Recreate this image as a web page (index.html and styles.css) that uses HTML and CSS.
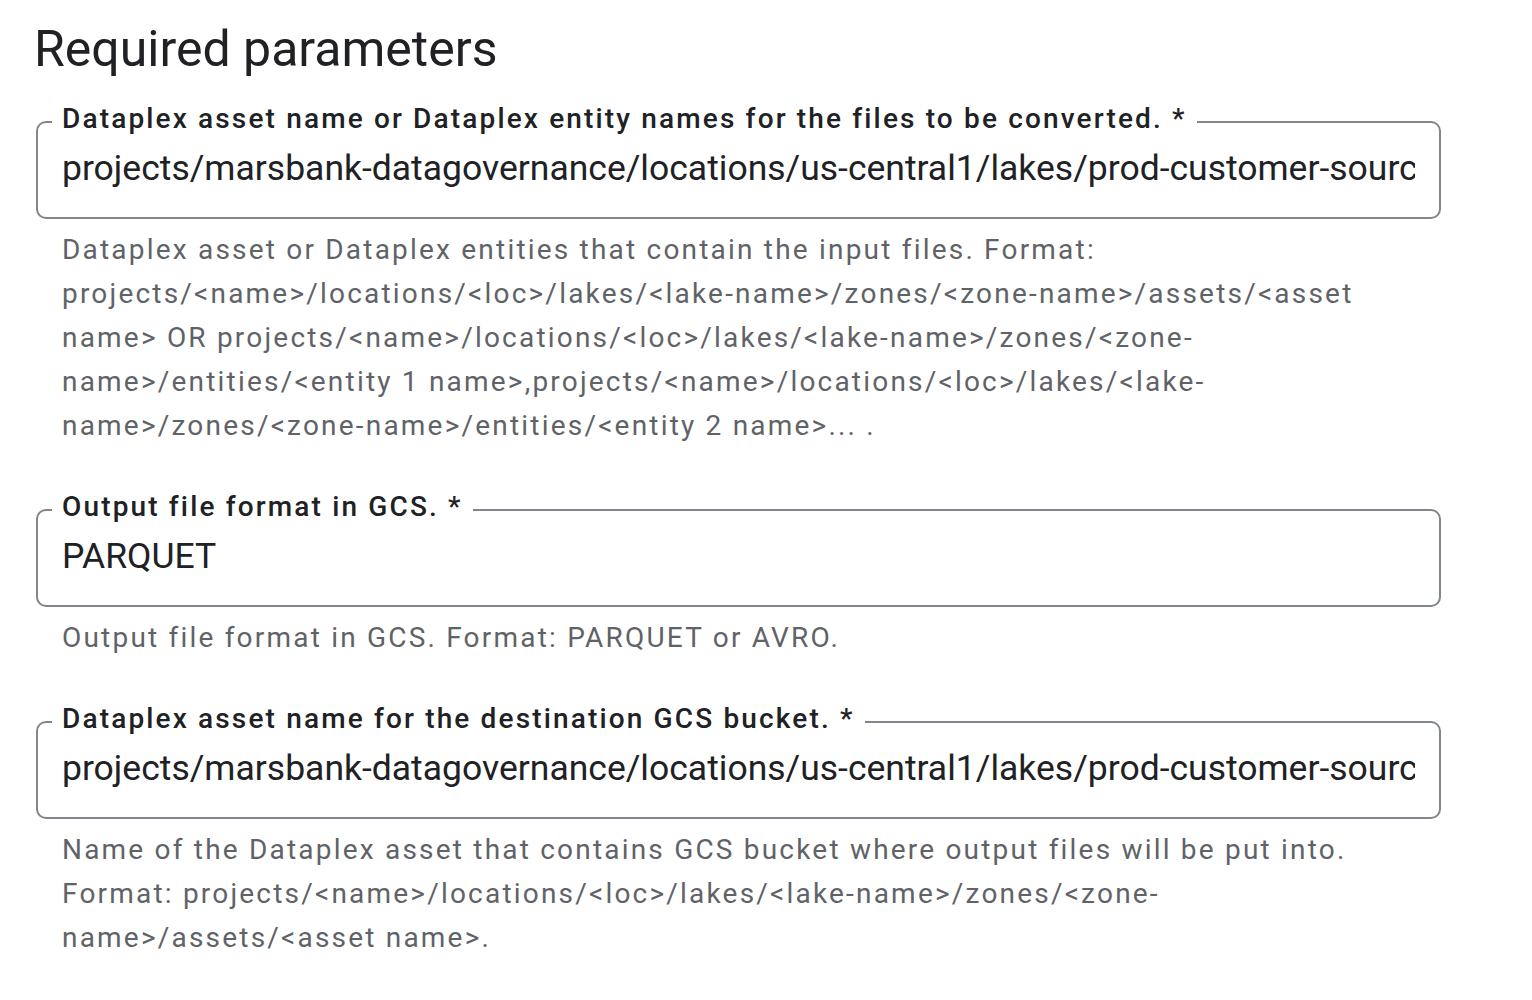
FILE: index.html
```html
<!DOCTYPE html>
<html>
<head>
<meta charset="utf-8">
<title>Required parameters</title>
<link rel="stylesheet" href="styles.css">
</head>
<body>
    <div class="params">
        <h2 class="params-title">Required parameters</h2>

        <!-- 输入资产 -->
        <div class="field-group">
            <fieldset class="field">
                <legend class="field-label">Dataplex asset name or Dataplex entity names for the files to be converted. *</legend>
                <input type="text" class="field-input" readonly value="projects/marsbank-datagovernance/locations/us-central1/lakes/prod-customer-source/zones/raw-zone/assets/customer-raw-data">
            </fieldset>
            <p class="field-hint">Dataplex asset or Dataplex entities that contain the input files. Format: projects/&lt;name&gt;/locations/&lt;loc&gt;/lakes/&lt;lake-name&gt;/zones/&lt;zone-name&gt;/assets/&lt;asset name&gt; OR projects/&lt;name&gt;/locations/&lt;loc&gt;/lakes/&lt;lake-name&gt;/zones/&lt;zone-name&gt;/entities/&lt;entity 1 name&gt;,projects/&lt;name&gt;/locations/&lt;loc&gt;/lakes/&lt;lake-name&gt;/zones/&lt;zone-name&gt;/entities/&lt;entity 2 name&gt;... .</p>
        </div>

        <!-- 输出格式 -->
        <div class="field-group">
            <fieldset class="field">
                <legend class="field-label">Output file format in GCS. *</legend>
                <input type="text" class="field-input" readonly value="PARQUET">
            </fieldset>
            <p class="field-hint">Output file format in GCS. Format: PARQUET or AVRO.</p>
        </div>

        <!-- 目标资产 -->
        <div class="field-group">
            <fieldset class="field">
                <legend class="field-label">Dataplex asset name for the destination GCS bucket. *</legend>
                <input type="text" class="field-input" readonly value="projects/marsbank-datagovernance/locations/us-central1/lakes/prod-customer-source/zones/curated-zone/assets/customer-curated-data">
            </fieldset>
            <p class="field-hint">Name of the Dataplex asset that contains GCS bucket where output files will be put into. Format: projects/&lt;name&gt;/locations/&lt;loc&gt;/lakes/&lt;lake-name&gt;/zones/&lt;zone-name&gt;/assets/&lt;asset name&gt;.</p>
        </div>
    </div>
</body>
</html>
```

FILE: styles.css
```css
* { margin: 0; padding: 0; box-sizing: border-box; }
body { background: #fff; font-family: Roboto, "Liberation Sans", Arial, sans-serif; color: #202124; }

.params { width: 1441px; padding-left: 36px; }
.params-title { margin: 19px 0 26px -2px; font-size: 50px; line-height: 60px; font-weight: 400; color: #202124; }

.field-group { margin-bottom: 45px; }
.field { width: 100%; border: 2px solid #80868b; border-radius: 10px; padding: 9px 24px 29px; min-width: 0; }
.field-label { margin-left: -10px; padding: 0 10px 6px; font-size: 28px; line-height: 28px; font-weight: 500; letter-spacing: 2.15px; color: #202124; }
.field-input { display: block; width: 100%; height: 40px; border: none; outline: none; background: transparent; font-family: inherit; font-size: 35.5px; color: #202124; }
.field-hint { margin-top: 9px; padding: 0 26px; font-size: 28px; line-height: 44px; letter-spacing: 2.2px; color: #5f6368; }
```
